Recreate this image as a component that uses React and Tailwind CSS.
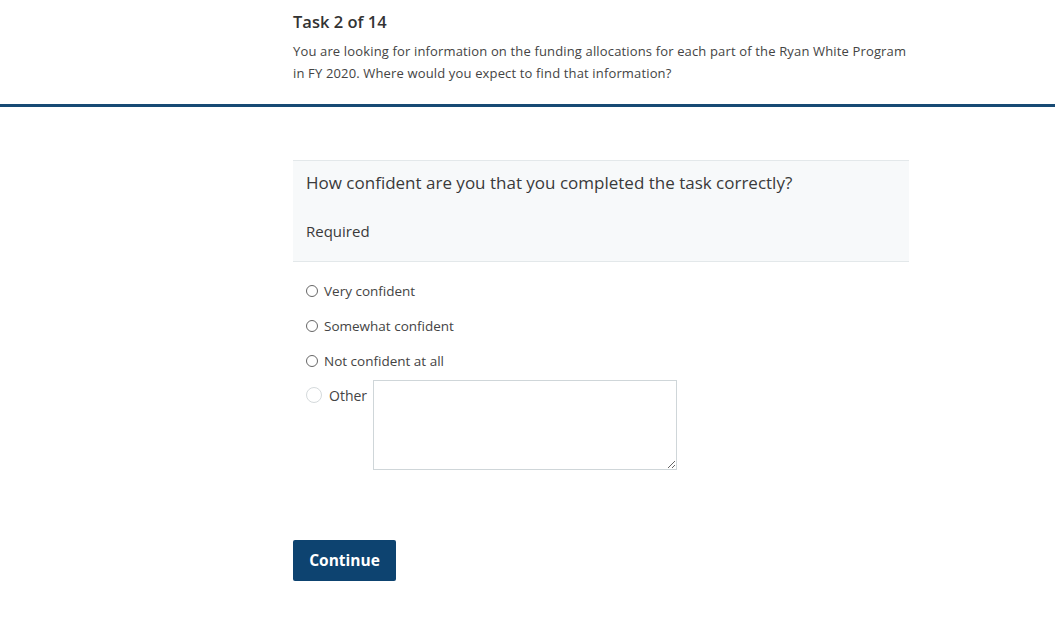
import React, { useState } from "react";

const options = ["Very confident", "Somewhat confident", "Not confident at all"];

export default function App() {
  const [choice, setChoice] = useState(null);

  return (
    <div className="min-h-screen bg-white text-[#333] font-['Open_Sans','Liberation_Sans',sans-serif] antialiased">
      <header className="border-b-[3px] border-[#174a74]">
        <div className="ml-[293px] w-[616px] pt-[10px] pb-[20px]">
          <h1 className="text-[16.5px] leading-[24px] font-semibold text-[#333]">Task 2 of 14</h1>
          <p className="mt-[6px] text-[13px] leading-[22px] tracking-[0.15px] text-[#444]">
            You are looking for information on the funding allocations for each part of the Ryan White Program in FY 2020.
            Where would you expect to find that information?
          </p>
        </div>
      </header>

      <main className="ml-[293px] w-[616px] pt-[53px]">
        <section className="bg-[#f7f9fa] border-y border-[#e3e8ea] px-[13px] pt-[10px] pb-[18px]">
          <h2 className="text-[17px] leading-[24px] text-[#3a3a3a]">How confident are you that you completed the task correctly?</h2>
          <p className="mt-[24px] text-[15px] leading-[24px] text-[#3a3a3a]">Required</p>
        </section>

        <div className="px-[13px] pt-[19px] flex flex-col gap-[15px]">
          {options.map((o) => (
            <label key={o} className="flex items-center gap-[6px] h-[20px] text-[13.5px] text-[#444] cursor-pointer">
              <input
                type="radio"
                name="confidence"
                checked={choice === o}
                onChange={() => setChoice(o)}
                className="appearance-none w-[12px] h-[12px] rounded-full border border-[#666] bg-white checked:border-[4px] checked:border-[#174a74]"
              />
              {o}
            </label>
          ))}
          <div className="flex items-start">
            <label className="flex items-center gap-[7px] h-[18px] text-[14px] text-[#444] cursor-pointer">
              <input
                type="radio"
                name="confidence"
                checked={choice === "Other"}
                onChange={() => setChoice("Other")}
                className="appearance-none w-[16px] h-[16px] rounded-full border border-[#d5dadc] bg-white checked:border-[5px] checked:border-[#174a74]"
              />
              Other
            </label>
            <textarea className="ml-[6px] -mt-[6px] w-[304px] h-[90px] border border-[#cfd6d9] bg-white outline-none text-[13px] p-[6px]" />
          </div>
        </div>

        <button className="mt-[70px] w-[103px] h-[41px] rounded-[2px] bg-[#0d4370] text-white text-[15.5px] font-bold">
          Continue
        </button>
      </main>
    </div>
  );
}
